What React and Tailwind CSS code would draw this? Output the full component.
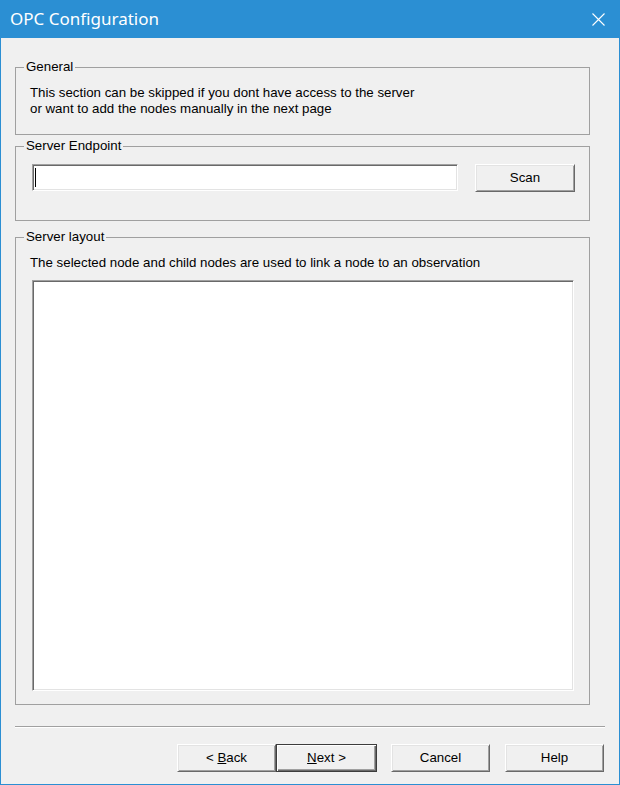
import React from 'react';

const font = { fontFamily: '"Liberation Sans", Arial, sans-serif' };

function GroupBox({ label, className, children }) {
  return (
    <fieldset className={`w-[575px] border border-[#a0a0a0] p-0 ${className}`}>
      <legend className="ml-[8px] px-[2px] text-[13.3px] leading-[16px] text-black">{label}</legend>
      {children}
    </fieldset>
  );
}

function Button({ children, isDefault, className = '' }) {
  return (
    <button
      className={`h-[28px] bg-[#f0f0f0] text-[13.3px] text-black ${
        isDefault
          ? 'border border-[#3c3c3c] shadow-[inset_1px_1px_0_#fff,inset_-1px_-1px_0_#696969,inset_-2px_-2px_0_#a0a0a0]'
          : 'border border-t-white border-l-white border-b-[#696969] border-r-[#696969] shadow-[inset_1px_1px_0_#e3e3e3,inset_-1px_-1px_0_#a0a0a0]'
      } ${className}`}
    >
      {children}
    </button>
  );
}

export default function App() {
  return (
    <div className="w-[620px] h-[785px] flex flex-col" style={font}>
      {/* Title bar */}
      <div className="h-[38px] bg-[#2b8fd3] flex items-center justify-between pl-[10px] pr-[15px]">
        <span className="text-white text-[17px] font-normal" style={{ fontFamily: '"Noto Sans", "Open Sans", sans-serif' }}>
          OPC Configuration
        </span>
        <svg width="13" height="13" viewBox="0 0 13 13" className="mt-[1px]">
          <path d="M0.5 0.5 L12.5 12.5 M12.5 0.5 L0.5 12.5" stroke="#fff" strokeWidth="1.1" fill="none" />
        </svg>
      </div>

      {/* Body */}
      <div className="flex-1 bg-[#f0f0f0] border-x border-b border-[#2b8fd3] pl-[14px] flex flex-col">
        <GroupBox label="General" className="mt-[21px]">
          <div className="mt-[10px] pl-[14px] pb-[17px] text-[13.3px] leading-[16px] text-black">
            <div>This section can be skipped if you dont have access to the server</div>
            <div>or want to add the nodes manually in the next page</div>
          </div>
        </GroupBox>

        <GroupBox label="Server Endpoint" className="mt-[3px]">
          <div className="mt-[10px] pl-[16px] pb-[28px] flex items-start">
            <div className="w-[426px] h-[27px] bg-white border border-t-[#a0a0a0] border-l-[#a0a0a0] border-b-white border-r-white shadow-[inset_1px_1px_0_#696969,inset_-1px_-1px_0_#e3e3e3] flex items-center pl-[2px]">
              <div className="w-[1px] h-[19px] bg-black" />
            </div>
            <Button className="ml-[17px] w-[100px]">Scan</Button>
          </div>
        </GroupBox>

        <GroupBox label="Server layout" className="mt-[8px]">
          <div className="mt-[10px] pl-[14px] text-[13.3px] leading-[16px] text-black">
            The selected node and child nodes are used to link a node to an observation
          </div>
          <div className="mt-[9px] ml-[16px] mb-[13px] w-[542px] h-[411px] bg-white border border-t-[#a0a0a0] border-l-[#a0a0a0] border-b-white border-r-white shadow-[inset_1px_1px_0_#696969,inset_-1px_-1px_0_#e3e3e3]" />
        </GroupBox>

        {/* Separator */}
        <div className="mt-[21px] w-[590px] h-[2px] border-t border-t-[#a0a0a0] border-b border-b-white" />

        {/* Wizard buttons */}
        <div className="mt-[16px] flex justify-end pr-[15px]">
          <Button className="w-[99px]">
            &lt; <span className="underline">B</span>ack
          </Button>
          <Button isDefault className="w-[101px]">
            <span className="underline">N</span>ext &gt;
          </Button>
          <Button className="ml-[14px] w-[99px]">Cancel</Button>
          <Button className="ml-[15px] w-[99px]">Help</Button>
        </div>
      </div>
    </div>
  );
}
